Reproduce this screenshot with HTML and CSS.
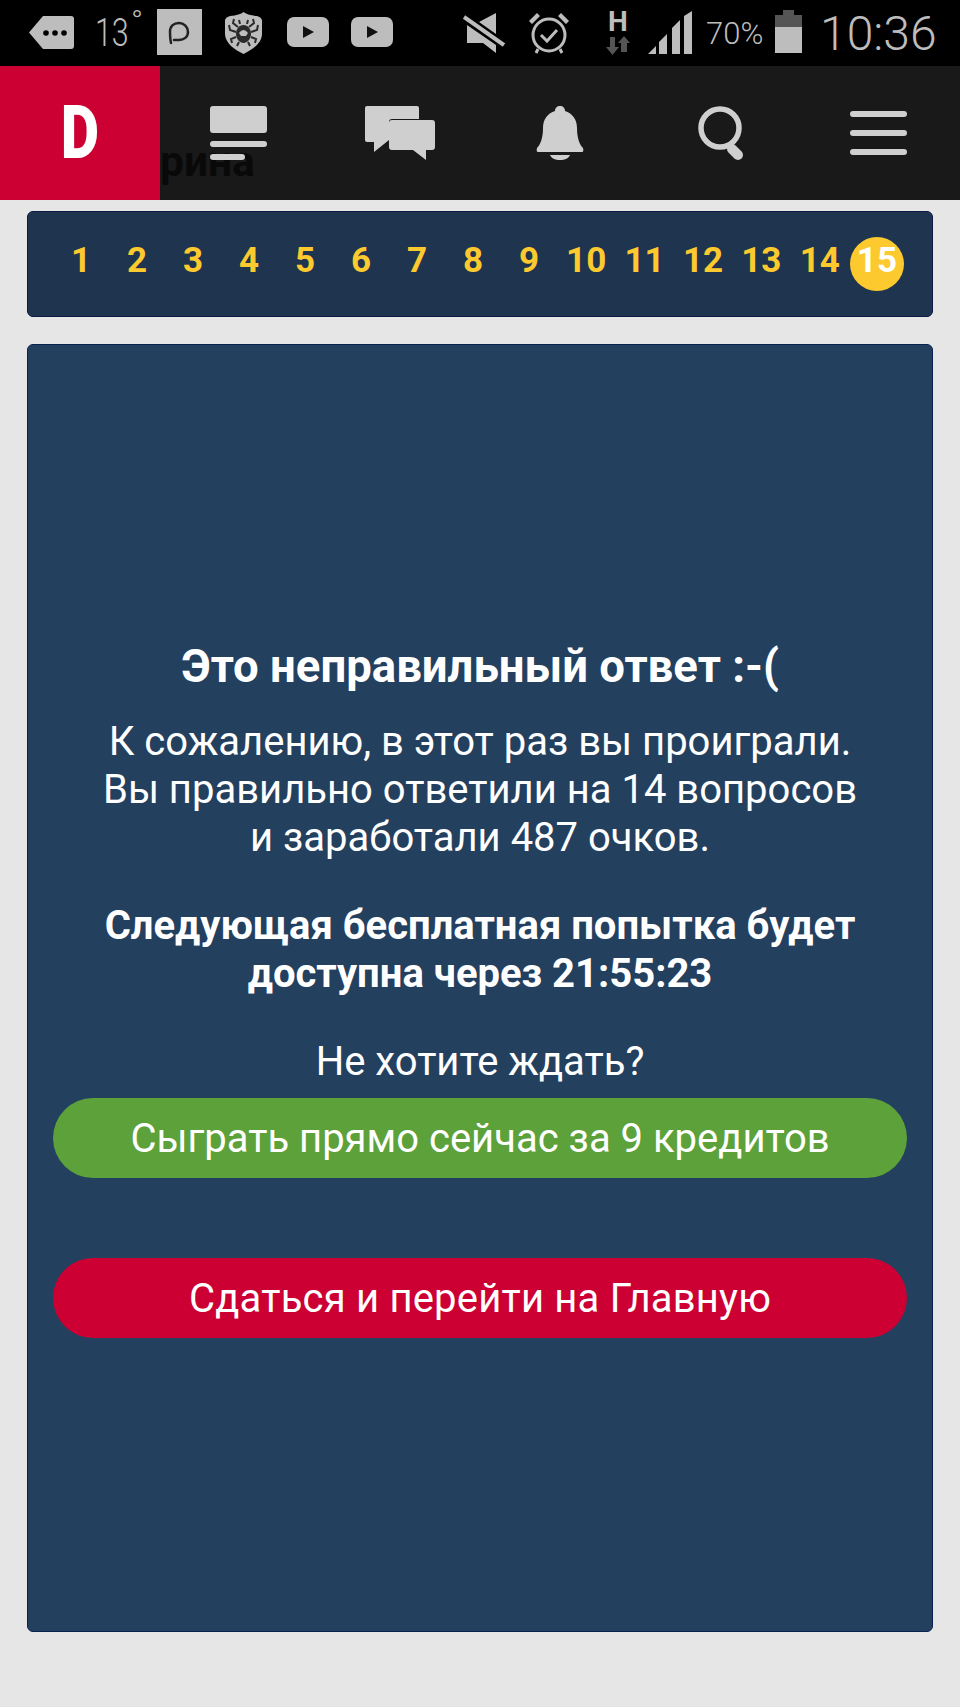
FILE: index.html
```html
<!DOCTYPE html>
<html lang="ru">

<head>
    <meta charset="UTF-8">
    <meta name="viewport" content="width=device-width, initial-scale=1.0">
    <title>Викторина</title>
    <link rel="stylesheet" href="styles.css">
</head>

<body>
    <div class="status-bar">
        <svg class="st-tag" width="45" height="35" viewBox="0 0 45 35">
            <path d="M14 1H42Q45 1 45 4V31Q45 34 42 34H14L0 17.500Z" fill="#bdbdbd"/>
            <circle cx="17" cy="18" r="2.800" fill="#000"/>
            <circle cx="26" cy="18" r="2.800" fill="#000"/>
            <circle cx="35" cy="18" r="2.800" fill="#000"/>
        </svg>
        <div class="st-temp"><span class="st-num">13</span><span class="st-deg">°</span></div>
        <svg class="st-square" width="45" height="46" viewBox="0 0 45 46">
            <rect width="45" height="46" fill="#bdbdbd"/>
            <path d="M14 34Q13 30 13 23C13 17 17 14 22 14C27 14 31 18 31 23C31 28 27 31 22 31H17" fill="none" stroke="#222" stroke-width="2.500" stroke-linecap="round"/>
        </svg>
        <svg class="st-shield" width="39" height="42" viewBox="0 0 39 42">
            <path d="M19.500 0Q23 3 33 4Q37 5 38 8V22C38 31 28 38 19.500 42C11 38 1 31 1 22V8Q2 5 6 4Q16 3 19.500 0Z" fill="#bdbdbd"/>
            <path d="M19.500 13C24 13 27 17 27 22C27 27 23 31 19.500 31C16 31 12 27 12 22C12 17 15 13 19.500 13Z" fill="#2a2a2a"/>
            <path d="M15 21Q19.500 15 24 21L22 24H17Z" fill="#bdbdbd"/>
            <path d="M14 15L9 11L10 7M25 15L30 11L29 7M12 20L6 18L5 13M27 20L33 18L34 13M12 25L7 27L8 31M27 25L32 27L31 31M15 30L13 34M24 30L26 34M16 12L15 8M23 12L24 8" stroke="#2a2a2a" stroke-width="2" fill="none"/>
        </svg>
        <svg class="st-yt" width="42" height="30" viewBox="0 0 42 30">
            <rect width="42" height="30" rx="7" fill="#bdbdbd"/>
            <path d="M16 9L27 15L16 21Z" fill="#111"/>
        </svg>
        <svg class="st-yt st-yt2" width="42" height="30" viewBox="0 0 42 30">
            <rect width="42" height="30" rx="7" fill="#bdbdbd"/>
            <path d="M16 9L27 15L16 21Z" fill="#111"/>
        </svg>
        <svg class="st-mute" width="42" height="41" viewBox="0 0 42 41">
            <path d="M33 0V21L16 9Z M4 12L33 32V40L20 30H4Z" fill="#bdbdbd"/>
            <path d="M1 4L41 32" stroke="#bdbdbd" stroke-width="4"/>
        </svg>
        <svg class="st-alarm" width="42" height="42" viewBox="0 0 42 42">
            <circle cx="21" cy="23" r="16" fill="none" stroke="#bdbdbd" stroke-width="3"/>
            <path d="M13 23L19 29L29 18" fill="none" stroke="#bdbdbd" stroke-width="3"/>
            <path d="M1 9L9 1L12 4L4 12Z M41 9L33 1L30 4L38 12Z" fill="#bdbdbd"/>
            <path d="M8 41L10 37M34 41L32 37" stroke="#bdbdbd" stroke-width="3"/>
        </svg>
        <div class="st-net">
            <div class="st-h">H</div>
            <svg width="24" height="19" viewBox="0 0 24 19">
                <path d="M4 1H9V11H13L6.500 19L0 11H4Z" fill="#555"/>
                <path d="M15 16V7H12L18 0L24 7H21V16Z" fill="#555"/>
            </svg>
        </div>
        <svg class="st-signal" width="44" height="43" viewBox="0 0 44 43">
            <path d="M0 43L8 35V43Z M11 43V31L19 23V43Z M24 43V17L32 9V43Z M36 43V5L44 0V43Z" fill="#bdbdbd"/>
        </svg>
        <div class="st-percent">70%</div>
        <svg class="st-battery" width="27" height="43" viewBox="0 0 27 43">
            <rect x="8" width="11" height="6" fill="#555"/>
            <rect y="5" width="27" height="12" fill="#555"/>
            <rect y="17" width="27" height="26" fill="#bdbdbd"/>
        </svg>
        <div class="st-time">10:36</div>
    </div>

    <div class="nav-bar">
        <div class="page-title">рина</div>
        <div class="logo"><span class="logo-letter">D</span></div>
        <div class="nav-item nav-cards">
            <svg width="57" height="54" viewBox="0 0 57 54">
                <rect width="57" height="27" rx="3" fill="#cfcfcf"/>
                <rect y="35" width="57" height="6" rx="3" fill="#cfcfcf"/>
                <rect y="48" width="35" height="6" rx="3" fill="#cfcfcf"/>
            </svg>
        </div>
        <div class="nav-item">
            <svg width="70" height="54" viewBox="0 0 70 54">
                <path d="M2 0H52Q54 0 54 2V13H27Q24 13 24 16V34L9 46V36H2Q0 36 0 34V2Q0 0 2 0Z" fill="#cfcfcf"/>
                <path d="M27 14H67Q70 14 70 17V41Q70 44 67 44H61V54L48 44H27Q24 44 24 41V17Q24 14 27 14Z" fill="#cfcfcf"/>
            </svg>
        </div>
        <div class="nav-item">
            <svg width="48" height="54" viewBox="0 0 48 54">
                <path d="M24 0C27 0 29 2 29 5C36 7 41 13 41 22C41 33 44 39 47 42Q48 46 46 46H2Q0 46 1 42C4 39 7 33 7 22C7 13 12 7 19 5C19 2 21 0 24 0Z" fill="#cfcfcf"/>
                <path d="M14 49H34C33 52 29 54 24 54C19 54 15 52 14 49Z" fill="#cfcfcf"/>
            </svg>
        </div>
        <div class="nav-item nav-search">
            <svg width="46" height="54" viewBox="0 0 46 54">
                <circle cx="22" cy="22" r="19" fill="none" stroke="#cfcfcf" stroke-width="5.500"/>
                <path d="M34 43L40 49" stroke="#cfcfcf" stroke-width="10" stroke-linecap="round"/>
            </svg>
        </div>
        <div class="nav-item nav-menu">
            <div class="burger">
                <div class="burger-line"></div>
                <div class="burger-line"></div>
                <div class="burger-line"></div>
            </div>
        </div>
    </div>

    <div class="content">
        <div class="steps">
            <div class="step">1</div>
            <div class="step">2</div>
            <div class="step">3</div>
            <div class="step">4</div>
            <div class="step">5</div>
            <div class="step">6</div>
            <div class="step">7</div>
            <div class="step">8</div>
            <div class="step">9</div>
            <div class="step step-wide">10</div>
            <div class="step step-wide">11</div>
            <div class="step step-wide">12</div>
            <div class="step step-wide">13</div>
            <div class="step step-wide">14</div>
            <div class="step step-current">15</div>
        </div>

        <div class="result-card">
            <div class="result-title">Это неправильный ответ :-(</div>
            <div class="result-text">К сожалению, в этот раз вы проиграли.<br>Вы правильно ответили на 14 вопросов<br>и заработали 487 очков.</div>
            <div class="result-next">Следующая бесплатная попытка будет<br>доступна через 21:55:23</div>
            <div class="result-ask">Не хотите ждать?</div>
            <div class="btn btn-green">Сыграть прямо сейчас за 9 кредитов</div>
            <div class="btn btn-red">Сдаться и перейти на Главную</div>
        </div>
    </div>
</body>

</html>
```
FILE: styles.css
```css
* {
    margin: 0;
    padding: 0;
    box-sizing: border-box;
}

body {
    background: #e6e6e6;
    font-family: 'Roboto', sans-serif;
    color: white;
    height: 1707px;
    overflow: hidden;
}

/* phone status bar */
.status-bar {
    height: 66px;
    background: #000;
    color: #bdbdbd;
    display: flex;
    align-items: flex-start;
}

.status-bar svg {
    flex: none;
    display: block;
}

.st-tag {
    margin: 15px 0 0 29px;
}

.st-temp {
    width: 62px;
    margin: 11px 0 0 21px;
    display: flex;
    align-items: flex-start;
    font-weight: 300;
}

.st-num {
    width: 36px;
    font-size: 38px;
    line-height: 44px;
    transform: scaleX(0.8);
    transform-origin: left;
}

.st-deg {
    font-size: 32px;
    line-height: 30px;
    margin-top: -5px;
}

.st-square {
    margin: 9px 0 0 0;
}

.st-shield {
    margin: 12px 0 0 22px;
}

.st-yt {
    margin: 17px 0 0 24px;
}

.st-yt2 {
    margin-left: 22px;
}

.st-mute {
    margin: 13px 0 0 70px;
}

.st-alarm {
    margin: 12px 0 0 23px;
}

.st-net {
    width: 24px;
    margin: 8px 0 0 36px;
}

.st-h {
    font-weight: 700;
    font-size: 28px;
    line-height: 28px;
    text-align: center;
}

.st-signal {
    margin: 11px 0 0 18px;
}

.st-percent {
    margin: 16px 0 0 14px;
    width: 62px;
    font-weight: 300;
    font-size: 31px;
    line-height: 36px;
    white-space: nowrap;
}

.st-battery {
    margin: 10px 0 0 7px;
}

.st-time {
    margin: 9px 0 0 18px;
    font-weight: 300;
    font-size: 48px;
    line-height: 50px;
    white-space: nowrap;
}

/* site nav, the page heading shows through it */
.nav-bar {
    height: 134px;
    background: #191919;
    display: flex;
    position: relative;
}

.page-title {
    position: absolute;
    left: 160px;
    top: 69px;
    font-size: 42.500px;
    line-height: 54px;
    font-weight: 700;
    color: #090909;
}

.logo {
    width: 160px;
    background: #cc0033;
    display: flex;
    justify-content: center;
    align-items: center;
    position: relative;
}

.logo-letter {
    display: inline-block;
    font-weight: 900;
    font-size: 74px;
    line-height: 74px;
    transform: scaleX(0.8);
}

.nav-item {
    width: 160px;
    display: flex;
    justify-content: center;
    align-items: center;
    position: relative;
}

.nav-cards {
    padding-right: 4px;
}

.nav-search {
    padding-left: 2px;
}

.nav-menu {
    padding-right: 4px;
}

.burger {
    width: 57px;
    display: flex;
    flex-direction: column;
    gap: 13px;
}

.burger-line {
    height: 6px;
    border-radius: 3px;
    background: #cfcfcf;
}

.content {
    padding: 11px 27px 0;
}

.steps {
    height: 106px;
    background: #1f344e;
    border: 1px solid #0a1a44;
    border-radius: 6px;
    padding: 25px 0 0 26px;
    display: flex;
    gap: 2px;
}

.step {
    width: 54px;
    height: 54px;
    flex: none;
    color: #fcca2e;
    font-weight: 700;
    font-size: 35px;
    line-height: 48px;
    text-align: center;
}

.step-wide {
    width: 56.400px;
}

.step-current {
    background: #fcca2e;
    color: white;
    border-radius: 50%;
}

.result-card {
    height: 1288px;
    margin-top: 27px;
    padding: 4px 25px 0;
    background: #24405f;
    border: 1px solid #0a2050;
    border-radius: 6px;
    display: flex;
    flex-direction: column;
    justify-content: center;
    text-align: center;
}

.result-title {
    font-size: 45.500px;
    line-height: 48px;
    font-weight: 700;
    margin-bottom: 27px;
}

.result-text {
    font-size: 40px;
    line-height: 48px;
    margin-bottom: 40px;
}

.result-next {
    font-size: 40px;
    line-height: 48px;
    font-weight: 700;
    margin-bottom: 40px;
}

.result-ask {
    font-size: 40px;
    line-height: 48px;
    margin-bottom: 12px;
}

.btn {
    height: 80px;
    padding-top: 2px;
    border-radius: 40px;
    font-size: 40px;
    line-height: 78px;
}

.btn-green {
    background: #5da13a;
}

.btn-red {
    background: #cc0033;
    margin-top: 80px;
    letter-spacing: 0.2px;
}
```
